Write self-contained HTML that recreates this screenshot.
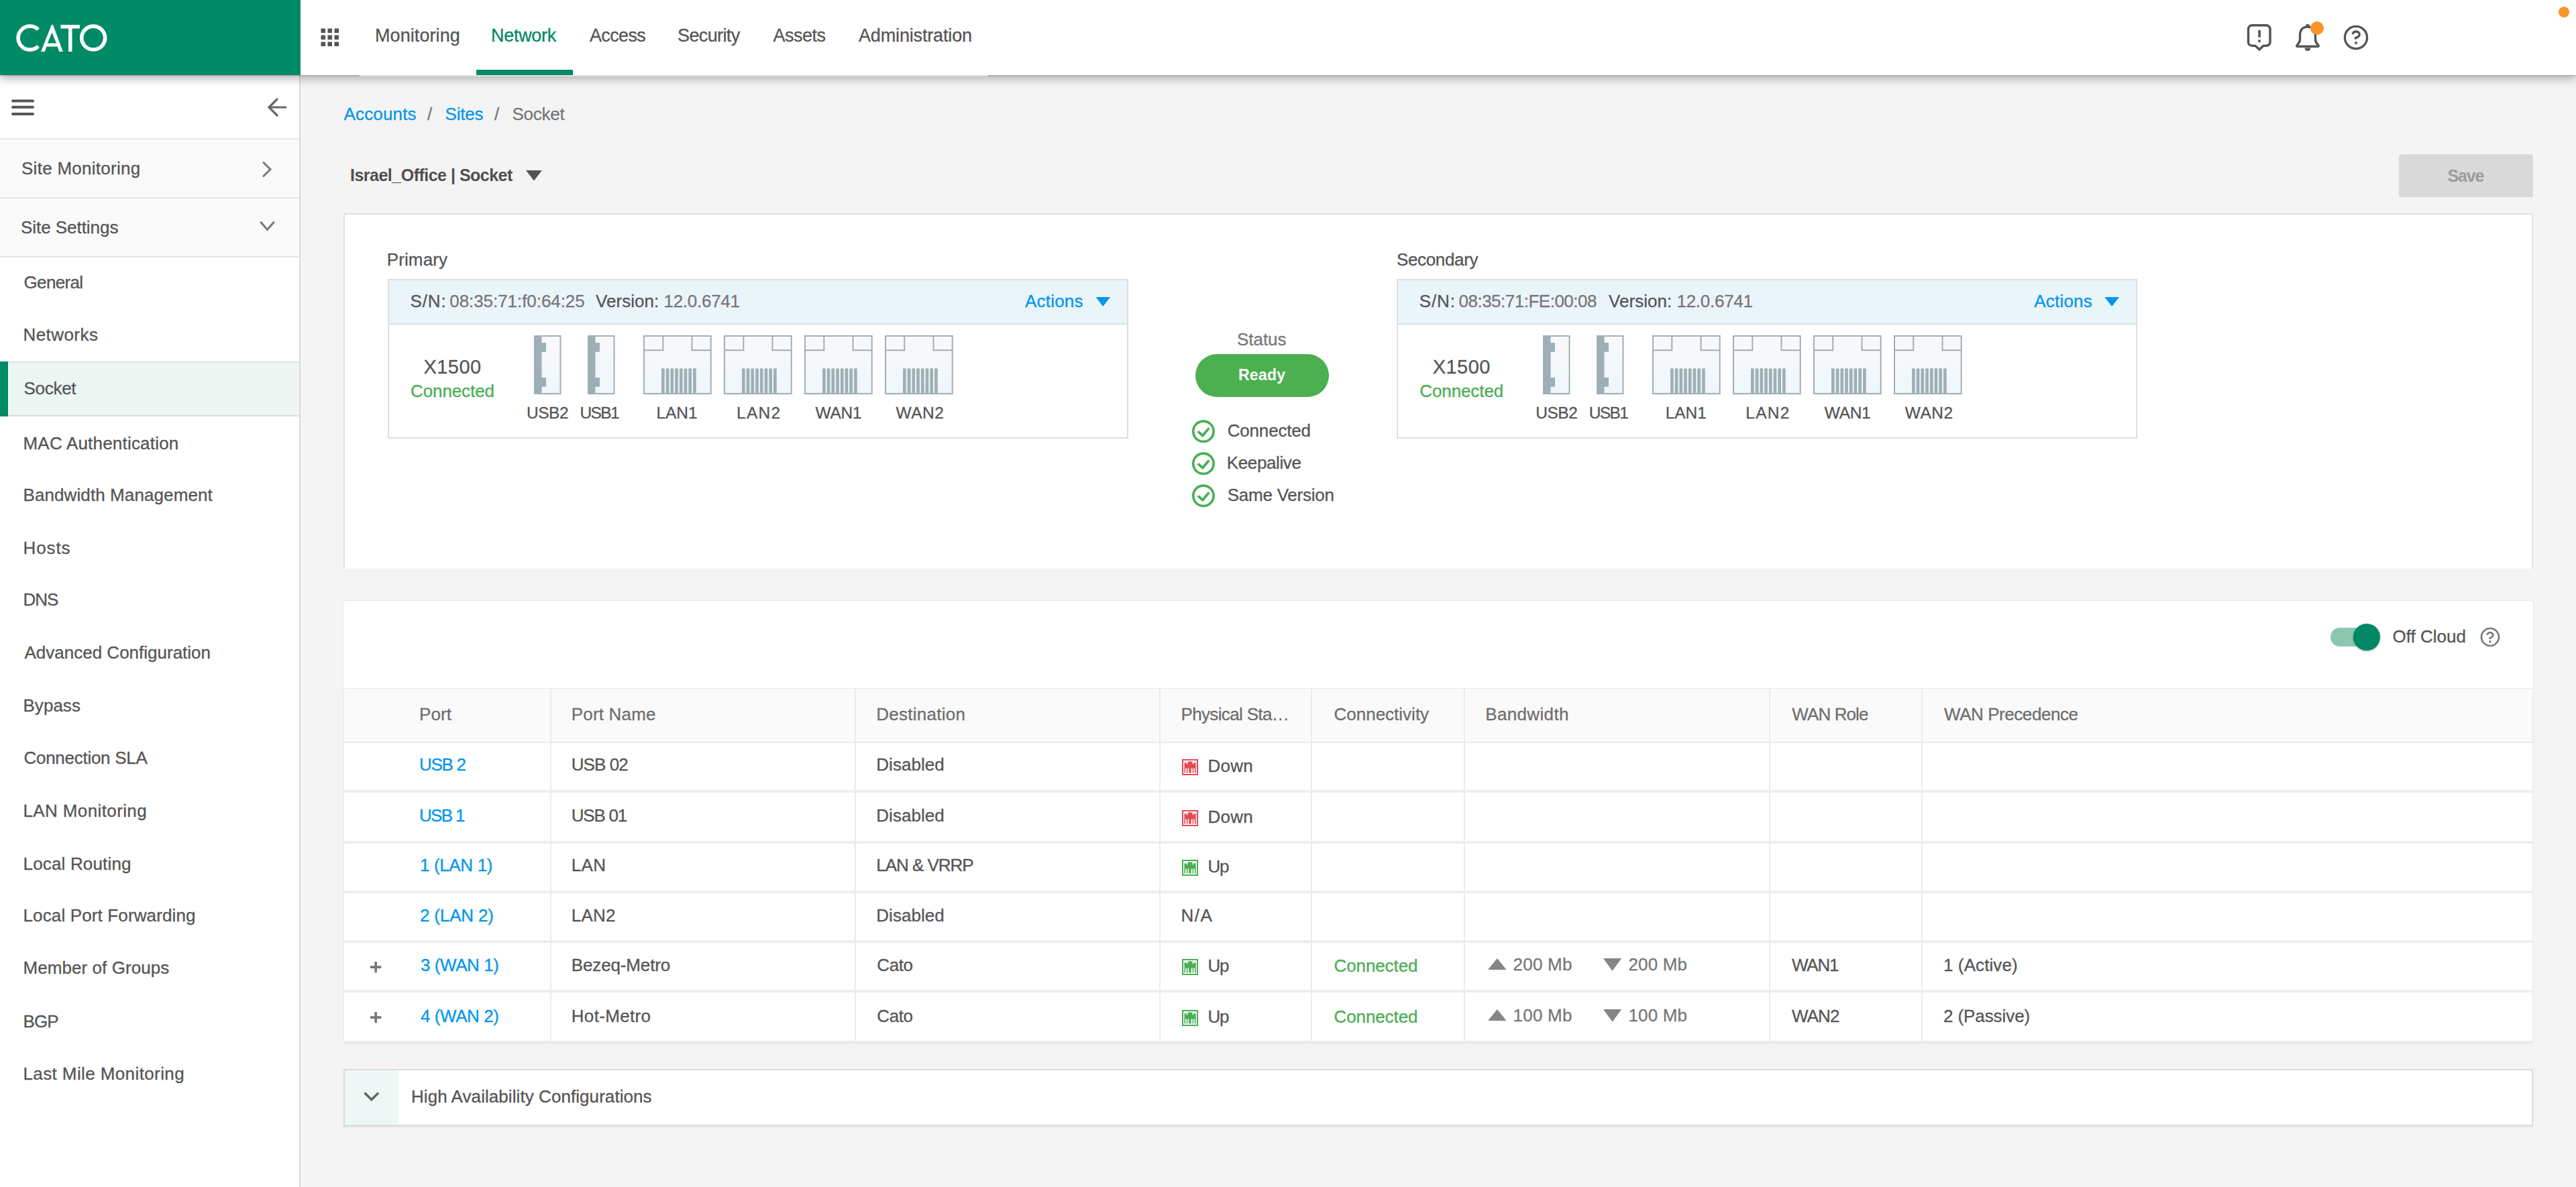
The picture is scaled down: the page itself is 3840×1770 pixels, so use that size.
<!DOCTYPE html>
<html>
<head>
<meta charset="utf-8">
<style>
html,body{margin:0;padding:0;}
body{width:3840px;height:1770px;overflow:hidden;background:#f4f4f4;position:relative;font-family:"Liberation Sans",sans-serif;color:#555;}
.a{position:absolute;}
.t{position:absolute;white-space:nowrap;font-size:26px;line-height:30px;-webkit-text-stroke:0.3px currentColor;}
svg{position:absolute;overflow:visible;}
#topbar{position:absolute;left:0;top:0;width:3840px;height:112px;background:#fff;box-shadow:0 1px 2px rgba(0,0,0,0.18),0 5px 14px rgba(0,0,0,0.30);z-index:5;}
#sidebar{position:absolute;left:0;top:112px;width:446px;height:1658px;background:#fff;border-right:2px solid #dadadd;z-index:2;}
</style>
</head>
<body>
<div id="topbar">
<div class="a" style="left:0.00px;top:0.00px;width:448.00px;height:112.00px;background:#018a66;"></div>
<svg width="448" height="112" style="left:0;top:0">
  <path d="M57.06,44.14 A17.55,17.55 0 1 0 57.06,68.96" fill="none" stroke="#fff" stroke-width="5.6"/>
  <path fill="#fff" fill-rule="evenodd" d="M61,76.9 L76.8,37.1 L79,37.1 L93.9,76.9 L88.2,76.9 L85.8,69.6 L69.3,69.6 L66.9,76.9 Z M77.4,48.3 L70.9,64.4 L84,64.4 Z"/>
  <path fill="#fff" d="M90.5,37.1 H118.9 V42.5 H107.5 V76.9 H102 V42.5 H90.5 Z"/>
  <circle cx="139.15" cy="56.55" r="17.45" fill="none" stroke="#fff" stroke-width="5.6"/>
</svg>
<svg width="30" height="30" style="left:478px;top:42px"><g fill="#555"><rect x="0.5" y="0.5" width="6.5" height="6.5"/><rect x="10.5" y="0.5" width="6.5" height="6.5"/><rect x="20.5" y="0.5" width="6.5" height="6.5"/><rect x="0.5" y="10.5" width="6.5" height="6.5"/><rect x="10.5" y="10.5" width="6.5" height="6.5"/><rect x="20.5" y="10.5" width="6.5" height="6.5"/><rect x="0.5" y="20.5" width="6.5" height="6.5"/><rect x="10.5" y="20.5" width="6.5" height="6.5"/><rect x="20.5" y="20.5" width="6.5" height="6.5"/></g></svg>
<div class="t" style="left:559.00px;top:37.94px;font-size:27px;line-height:30px;letter-spacing:0.078px;">Monitoring</div>
<div class="t" style="left:732.00px;top:37.94px;font-size:27px;line-height:30px;color:#018a66;letter-spacing:-0.295px;">Network</div>
<div class="t" style="left:879.00px;top:37.94px;font-size:27px;line-height:30px;letter-spacing:-0.655px;">Access</div>
<div class="t" style="left:1010.00px;top:37.94px;font-size:27px;line-height:30px;letter-spacing:-0.612px;">Security</div>
<div class="t" style="left:1152.50px;top:37.94px;font-size:27px;line-height:30px;letter-spacing:-0.505px;">Assets</div>
<div class="t" style="left:1280.00px;top:37.94px;font-size:27px;line-height:30px;letter-spacing:-0.158px;">Administration</div>
<div class="a" style="left:710.00px;top:104.00px;width:144.00px;height:8.00px;background:#018a66;"></div>
<div class="a" style="left:536.00px;top:112.00px;width:937.00px;height:2.00px;background:#e2e2e2;"></div>
<svg width="40" height="44" style="left:3348px;top:34px">
  <path d="M9,3.8 H30.5 A5.5,5.5 0 0 1 36,9.3 V28.7 A5.5,5.5 0 0 1 30.5,34.2 H26 L20,40 L14,34.2 H9 A5.5,5.5 0 0 1 3.5,28.7 V9.3 A5.5,5.5 0 0 1 9,3.8 Z" fill="none" stroke="#555" stroke-width="3.5" stroke-linejoin="round"/>
  <rect x="18.2" y="11" width="3.7" height="10.6" fill="#555"/>
  <rect x="18.2" y="25.4" width="3.7" height="3.5" fill="#555"/>
</svg>
<svg width="44" height="44" style="left:3418px;top:34px">
  <path d="M22,6 C13.5,6 10.5,12 10.5,19 V25 C10.5,28.5 8.5,31 6.5,33 C5,34.5 5.5,35.3 7.5,35.3 H36.5 C38.5,35.3 39,34.5 37.5,33 C35.5,31 33.5,28.5 33.5,25 V19 C33.5,12 30.5,6 22,6 Z" fill="none" stroke="#555" stroke-width="3.4" stroke-linejoin="round"/>
  <circle cx="22" cy="4.5" r="2.8" fill="#555"/>
  <path d="M17.5,37.5 A4.5,4.5 0 0 0 26.5,37.5 Z" fill="#555"/>
</svg>
<div class="a" style="left:3444px;top:32px;width:20px;height:20px;border-radius:50%;background:#fb9428;"></div>
<svg width="44" height="44" style="left:3490px;top:34px">
  <circle cx="22" cy="22" r="16.6" fill="none" stroke="#555" stroke-width="3.3"/>
  <path d="M17,17 C17.8,14 20,13 22.3,13 C25.2,13 27.3,15 27.3,17.4 C27.3,20.4 24.3,21.3 21.5,22.6 V24.5" fill="none" stroke="#555" stroke-width="3.3"/>
  <circle cx="22" cy="30" r="2.1" fill="#555"/>
</svg>
<div class="a" style="left:3814px;top:10px;width:16px;height:16px;border-radius:50%;background:#fb9428;"></div>
</div>
<div id="sidebar">
<svg width="40" height="30" style="left:15px;top:34px"><g stroke="#555" stroke-width="4" stroke-linecap="round">
<line x1="4" y1="4.4" x2="34" y2="4.4"/><line x1="4" y1="13.8" x2="34" y2="13.8"/><line x1="4" y1="24" x2="34" y2="24"/></g></svg>
<svg width="34" height="34" style="left:397px;top:31px"><g stroke="#666" stroke-width="3.2" stroke-linecap="round" fill="none">
<line x1="4.5" y1="17" x2="29" y2="17"/><polyline points="16,5 4,17 16,29"/></g></svg>
<div class="a" style="left:0.00px;top:94.00px;width:446.00px;height:2.00px;background:#e6e6e6;"></div>
<div class="a" style="left:0.00px;top:96.00px;width:446.00px;height:86.00px;background:#fafafa;"></div>
<div class="a" style="left:0.00px;top:182.00px;width:446.00px;height:2.00px;background:#e6e6e6;"></div>
<div class="a" style="left:0.00px;top:184.00px;width:446.00px;height:86.00px;background:#fafafa;"></div>
<div class="a" style="left:0.00px;top:270.00px;width:446.00px;height:2.00px;background:#e6e6e6;"></div>
<div class="t" style="left:32.00px;top:124.19px;letter-spacing:0.271px;">Site Monitoring</div>
<svg width="20" height="26" style="left:389px;top:128px"><polyline points="4,2.5 14,12.5 4,22.5" fill="none" stroke="#777" stroke-width="3" stroke-linecap="round"/></svg>
<div class="t" style="left:31.00px;top:212.39px;letter-spacing:-0.048px;">Site Settings</div>
<svg width="26" height="18" style="left:385px;top:216px"><polyline points="4,3.5 13.5,14.5 23,3.5" fill="none" stroke="#777" stroke-width="3" stroke-linecap="round"/></svg>
<div class="a" style="left:0.00px;top:426.50px;width:446.00px;height:78.00px;background:#eef6f4;border-top:2px solid #dedede;border-bottom:2px solid #dedede;"></div>
<div class="a" style="left:0.00px;top:426.50px;width:12.00px;height:82.00px;background:#018a66;"></div>
<div class="t" style="left:35.50px;top:293.99px;letter-spacing:-0.654px;">General</div>
<div class="t" style="left:34.50px;top:371.99px;letter-spacing:0.435px;">Networks</div>
<div class="t" style="left:35.50px;top:451.69px;letter-spacing:-0.292px;">Socket</div>
<div class="t" style="left:34.50px;top:533.59px;letter-spacing:0.204px;">MAC Authentication</div>
<div class="t" style="left:34.50px;top:610.99px;letter-spacing:0.096px;">Bandwidth Management</div>
<div class="t" style="left:34.50px;top:689.99px;letter-spacing:0.910px;">Hosts</div>
<div class="t" style="left:34.50px;top:767.29px;letter-spacing:-1.026px;">DNS</div>
<div class="t" style="left:36.50px;top:845.99px;">Advanced Configuration</div>
<div class="t" style="left:34.50px;top:924.79px;letter-spacing:0.028px;">Bypass</div>
<div class="t" style="left:35.50px;top:1002.59px;letter-spacing:-0.274px;">Connection SLA</div>
<div class="t" style="left:34.50px;top:1081.99px;letter-spacing:0.382px;">LAN Monitoring</div>
<div class="t" style="left:34.50px;top:1160.99px;letter-spacing:0.172px;">Local Routing</div>
<div class="t" style="left:34.50px;top:1237.99px;letter-spacing:0.136px;">Local Port Forwarding</div>
<div class="t" style="left:34.50px;top:1316.49px;letter-spacing:0.070px;">Member of Groups</div>
<div class="t" style="left:34.50px;top:1395.59px;letter-spacing:-0.933px;">BGP</div>
<div class="t" style="left:34.50px;top:1473.99px;letter-spacing:0.395px;">Last Mile Monitoring</div>
</div>
<div class="t" style="left:512.50px;top:155.49px;color:#0396ec;letter-spacing:0.151px;">Accounts</div>
<div class="t" style="left:637.00px;top:155.49px;color:#777;">/</div>
<div class="t" style="left:663.50px;top:155.49px;color:#0396ec;letter-spacing:-0.200px;">Sites</div>
<div class="t" style="left:737.00px;top:155.49px;color:#777;">/</div>
<div class="t" style="left:763.50px;top:155.49px;color:#777;letter-spacing:-0.252px;">Socket</div>
<div class="t" style="left:522.00px;top:246.34px;font-size:25px;line-height:30px;color:#4f4f4f;font-weight:bold;-webkit-text-stroke:0;letter-spacing:-0.506px;">Israel_Office | Socket</div>
<svg width="30" height="20" style="left:782px;top:252px"><path d="M2,2 H26 L14,17.5 Z" fill="#555"/></svg>
<div class="a" style="left:3576.00px;top:230.00px;width:200.00px;height:64.00px;background:#d9d9d9;border-radius:4px;"></div>
<div class="t" style="left:3648.50px;top:246.84px;font-size:25px;line-height:30px;color:#9c9c9c;font-weight:bold;-webkit-text-stroke:0;letter-spacing:-1.161px;">Save</div>
<div class="a" style="left:512.00px;top:318.00px;width:3264.00px;height:530.00px;background:#fff;box-sizing:border-box;border:2px solid #e1e1e1;border-bottom:none;"></div>
<svg width="0" height="0" style="left:0;top:0"><defs><linearGradient id="pg" x1="0" y1="0" x2="0" y2="1"><stop offset="0" stop-color="#f9f9fb"/><stop offset="1" stop-color="#eef7fa"/></linearGradient></defs></svg>
<div class="t" style="left:576.75px;top:372.24px;letter-spacing:0.116px;">Primary</div>
<div class="a" style="left:578.00px;top:416.00px;width:1104.00px;height:238.00px;background:#fff;box-sizing:border-box;border:2px solid #dcdfe1;"></div>
<div class="a" style="left:580.00px;top:418.00px;width:1100.00px;height:64.00px;background:#eaf5fa;border-bottom:2px solid #d8dfe2;"></div>
<div class="t" style="left:611.50px;top:433.99px;letter-spacing:0.886px;">S/N:</div>
<div class="t" style="left:670.25px;top:433.99px;color:#777;letter-spacing:-0.059px;">08:35:71:f0:64:25</div>
<div class="t" style="left:888.00px;top:433.99px;letter-spacing:0.040px;">Version:</div>
<div class="t" style="left:989.50px;top:433.99px;color:#777;letter-spacing:-0.276px;">12.0.6741</div>
<div class="t" style="left:1528.00px;top:434.24px;color:#0396ec;letter-spacing:0.206px;">Actions</div>
<svg width="24" height="18" style="left:1631.00px;top:441px"><path d="M2.5,2 H24 L13.2,16 Z" fill="#0396ec"/></svg>
<div class="t" style="left:631.50px;top:529.45px;font-size:29px;line-height:36px;letter-spacing:0.443px;">X1500</div>
<div class="t" style="left:612.00px;top:568.49px;color:#4aae54;letter-spacing:-0.100px;">Connected</div>
<svg width="41" height="88" style="left:795.75px;top:500.00px"><rect x="1" y="1" width="38.5" height="86" fill="url(#pg)" stroke="#9eb0b6" stroke-width="2"/><path d="M0,0 H11.5 V11 H18 V24.7 H11.5 V63 H18 V76.8 H11.5 V88 H0 Z" fill="#9eb0b6"/></svg>
<svg width="41" height="88" style="left:875.75px;top:500.00px"><rect x="1" y="1" width="38.5" height="86" fill="url(#pg)" stroke="#9eb0b6" stroke-width="2"/><path d="M0,0 H11.5 V11 H18 V24.7 H11.5 V63 H18 V76.8 H11.5 V88 H0 Z" fill="#9eb0b6"/></svg>
<svg width="102" height="88" style="left:959.00px;top:500.00px"><rect x="1" y="1" width="99.7" height="86" fill="url(#pg)" stroke="#9eb0b6" stroke-width="2"/><path d="M1,22.2 H29.3 V1 M100.7,22.2 H72.5 V1" fill="none" stroke="#9eb0b6" stroke-width="2"/><rect x="27.00" y="49.4" width="4.7" height="38" fill="#9eb0b6"/><rect x="33.72" y="49.4" width="4.7" height="38" fill="#9eb0b6"/><rect x="40.44" y="49.4" width="4.7" height="38" fill="#9eb0b6"/><rect x="47.16" y="49.4" width="4.7" height="38" fill="#9eb0b6"/><rect x="53.88" y="49.4" width="4.7" height="38" fill="#9eb0b6"/><rect x="60.60" y="49.4" width="4.7" height="38" fill="#9eb0b6"/><rect x="67.32" y="49.4" width="4.7" height="38" fill="#9eb0b6"/><rect x="74.04" y="49.4" width="4.7" height="38" fill="#9eb0b6"/></svg>
<svg width="102" height="88" style="left:1079.00px;top:500.00px"><rect x="1" y="1" width="99.7" height="86" fill="url(#pg)" stroke="#9eb0b6" stroke-width="2"/><path d="M1,22.2 H29.3 V1 M100.7,22.2 H72.5 V1" fill="none" stroke="#9eb0b6" stroke-width="2"/><rect x="27.00" y="49.4" width="4.7" height="38" fill="#9eb0b6"/><rect x="33.72" y="49.4" width="4.7" height="38" fill="#9eb0b6"/><rect x="40.44" y="49.4" width="4.7" height="38" fill="#9eb0b6"/><rect x="47.16" y="49.4" width="4.7" height="38" fill="#9eb0b6"/><rect x="53.88" y="49.4" width="4.7" height="38" fill="#9eb0b6"/><rect x="60.60" y="49.4" width="4.7" height="38" fill="#9eb0b6"/><rect x="67.32" y="49.4" width="4.7" height="38" fill="#9eb0b6"/><rect x="74.04" y="49.4" width="4.7" height="38" fill="#9eb0b6"/></svg>
<svg width="102" height="88" style="left:1199.00px;top:500.00px"><rect x="1" y="1" width="99.7" height="86" fill="url(#pg)" stroke="#9eb0b6" stroke-width="2"/><path d="M1,22.2 H29.3 V1 M100.7,22.2 H72.5 V1" fill="none" stroke="#9eb0b6" stroke-width="2"/><rect x="27.00" y="49.4" width="4.7" height="38" fill="#9eb0b6"/><rect x="33.72" y="49.4" width="4.7" height="38" fill="#9eb0b6"/><rect x="40.44" y="49.4" width="4.7" height="38" fill="#9eb0b6"/><rect x="47.16" y="49.4" width="4.7" height="38" fill="#9eb0b6"/><rect x="53.88" y="49.4" width="4.7" height="38" fill="#9eb0b6"/><rect x="60.60" y="49.4" width="4.7" height="38" fill="#9eb0b6"/><rect x="67.32" y="49.4" width="4.7" height="38" fill="#9eb0b6"/><rect x="74.04" y="49.4" width="4.7" height="38" fill="#9eb0b6"/></svg>
<svg width="102" height="88" style="left:1319.00px;top:500.00px"><rect x="1" y="1" width="99.7" height="86" fill="url(#pg)" stroke="#9eb0b6" stroke-width="2"/><path d="M1,22.2 H29.3 V1 M100.7,22.2 H72.5 V1" fill="none" stroke="#9eb0b6" stroke-width="2"/><rect x="27.00" y="49.4" width="4.7" height="38" fill="#9eb0b6"/><rect x="33.72" y="49.4" width="4.7" height="38" fill="#9eb0b6"/><rect x="40.44" y="49.4" width="4.7" height="38" fill="#9eb0b6"/><rect x="47.16" y="49.4" width="4.7" height="38" fill="#9eb0b6"/><rect x="53.88" y="49.4" width="4.7" height="38" fill="#9eb0b6"/><rect x="60.60" y="49.4" width="4.7" height="38" fill="#9eb0b6"/><rect x="67.32" y="49.4" width="4.7" height="38" fill="#9eb0b6"/><rect x="74.04" y="49.4" width="4.7" height="38" fill="#9eb0b6"/></svg>
<div class="t" style="left:785.00px;top:600.51px;font-size:24.5px;line-height:30px;letter-spacing:-0.459px;">USB2</div>
<div class="t" style="left:864.40px;top:600.51px;font-size:24.5px;line-height:30px;letter-spacing:-1.592px;">USB1</div>
<div class="t" style="left:978.50px;top:600.51px;font-size:24.5px;line-height:30px;letter-spacing:-0.087px;">LAN1</div>
<div class="t" style="left:1098.00px;top:600.51px;font-size:24.5px;line-height:30px;letter-spacing:1.280px;">LAN2</div>
<div class="t" style="left:1215.50px;top:600.51px;font-size:24.5px;line-height:30px;letter-spacing:-0.333px;">WAN1</div>
<div class="t" style="left:1335.50px;top:600.51px;font-size:24.5px;line-height:30px;letter-spacing:0.500px;">WAN2</div>
<div class="t" style="left:2082.00px;top:372.24px;letter-spacing:-0.350px;">Secondary</div>
<div class="a" style="left:2082.25px;top:416.00px;width:1104.00px;height:238.00px;background:#fff;box-sizing:border-box;border:2px solid #dcdfe1;"></div>
<div class="a" style="left:2084.25px;top:418.00px;width:1100.00px;height:64.00px;background:#eaf5fa;border-bottom:2px solid #d8dfe2;"></div>
<div class="t" style="left:2115.75px;top:433.99px;letter-spacing:0.886px;">S/N:</div>
<div class="t" style="left:2174.50px;top:433.99px;color:#777;letter-spacing:-0.499px;">08:35:71:FE:00:08</div>
<div class="t" style="left:2398.00px;top:433.99px;letter-spacing:0.040px;">Version:</div>
<div class="t" style="left:2499.50px;top:433.99px;color:#777;letter-spacing:-0.276px;">12.0.6741</div>
<div class="t" style="left:3032.25px;top:434.24px;color:#0396ec;letter-spacing:0.206px;">Actions</div>
<svg width="24" height="18" style="left:3135.25px;top:441px"><path d="M2.5,2 H24 L13.2,16 Z" fill="#0396ec"/></svg>
<div class="t" style="left:2135.75px;top:529.45px;font-size:29px;line-height:36px;letter-spacing:0.443px;">X1500</div>
<div class="t" style="left:2116.25px;top:568.49px;color:#4aae54;letter-spacing:-0.100px;">Connected</div>
<svg width="41" height="88" style="left:2300.00px;top:500.00px"><rect x="1" y="1" width="38.5" height="86" fill="url(#pg)" stroke="#9eb0b6" stroke-width="2"/><path d="M0,0 H11.5 V11 H18 V24.7 H11.5 V63 H18 V76.8 H11.5 V88 H0 Z" fill="#9eb0b6"/></svg>
<svg width="41" height="88" style="left:2380.00px;top:500.00px"><rect x="1" y="1" width="38.5" height="86" fill="url(#pg)" stroke="#9eb0b6" stroke-width="2"/><path d="M0,0 H11.5 V11 H18 V24.7 H11.5 V63 H18 V76.8 H11.5 V88 H0 Z" fill="#9eb0b6"/></svg>
<svg width="102" height="88" style="left:2463.25px;top:500.00px"><rect x="1" y="1" width="99.7" height="86" fill="url(#pg)" stroke="#9eb0b6" stroke-width="2"/><path d="M1,22.2 H29.3 V1 M100.7,22.2 H72.5 V1" fill="none" stroke="#9eb0b6" stroke-width="2"/><rect x="27.00" y="49.4" width="4.7" height="38" fill="#9eb0b6"/><rect x="33.72" y="49.4" width="4.7" height="38" fill="#9eb0b6"/><rect x="40.44" y="49.4" width="4.7" height="38" fill="#9eb0b6"/><rect x="47.16" y="49.4" width="4.7" height="38" fill="#9eb0b6"/><rect x="53.88" y="49.4" width="4.7" height="38" fill="#9eb0b6"/><rect x="60.60" y="49.4" width="4.7" height="38" fill="#9eb0b6"/><rect x="67.32" y="49.4" width="4.7" height="38" fill="#9eb0b6"/><rect x="74.04" y="49.4" width="4.7" height="38" fill="#9eb0b6"/></svg>
<svg width="102" height="88" style="left:2583.25px;top:500.00px"><rect x="1" y="1" width="99.7" height="86" fill="url(#pg)" stroke="#9eb0b6" stroke-width="2"/><path d="M1,22.2 H29.3 V1 M100.7,22.2 H72.5 V1" fill="none" stroke="#9eb0b6" stroke-width="2"/><rect x="27.00" y="49.4" width="4.7" height="38" fill="#9eb0b6"/><rect x="33.72" y="49.4" width="4.7" height="38" fill="#9eb0b6"/><rect x="40.44" y="49.4" width="4.7" height="38" fill="#9eb0b6"/><rect x="47.16" y="49.4" width="4.7" height="38" fill="#9eb0b6"/><rect x="53.88" y="49.4" width="4.7" height="38" fill="#9eb0b6"/><rect x="60.60" y="49.4" width="4.7" height="38" fill="#9eb0b6"/><rect x="67.32" y="49.4" width="4.7" height="38" fill="#9eb0b6"/><rect x="74.04" y="49.4" width="4.7" height="38" fill="#9eb0b6"/></svg>
<svg width="102" height="88" style="left:2703.25px;top:500.00px"><rect x="1" y="1" width="99.7" height="86" fill="url(#pg)" stroke="#9eb0b6" stroke-width="2"/><path d="M1,22.2 H29.3 V1 M100.7,22.2 H72.5 V1" fill="none" stroke="#9eb0b6" stroke-width="2"/><rect x="27.00" y="49.4" width="4.7" height="38" fill="#9eb0b6"/><rect x="33.72" y="49.4" width="4.7" height="38" fill="#9eb0b6"/><rect x="40.44" y="49.4" width="4.7" height="38" fill="#9eb0b6"/><rect x="47.16" y="49.4" width="4.7" height="38" fill="#9eb0b6"/><rect x="53.88" y="49.4" width="4.7" height="38" fill="#9eb0b6"/><rect x="60.60" y="49.4" width="4.7" height="38" fill="#9eb0b6"/><rect x="67.32" y="49.4" width="4.7" height="38" fill="#9eb0b6"/><rect x="74.04" y="49.4" width="4.7" height="38" fill="#9eb0b6"/></svg>
<svg width="102" height="88" style="left:2823.25px;top:500.00px"><rect x="1" y="1" width="99.7" height="86" fill="url(#pg)" stroke="#9eb0b6" stroke-width="2"/><path d="M1,22.2 H29.3 V1 M100.7,22.2 H72.5 V1" fill="none" stroke="#9eb0b6" stroke-width="2"/><rect x="27.00" y="49.4" width="4.7" height="38" fill="#9eb0b6"/><rect x="33.72" y="49.4" width="4.7" height="38" fill="#9eb0b6"/><rect x="40.44" y="49.4" width="4.7" height="38" fill="#9eb0b6"/><rect x="47.16" y="49.4" width="4.7" height="38" fill="#9eb0b6"/><rect x="53.88" y="49.4" width="4.7" height="38" fill="#9eb0b6"/><rect x="60.60" y="49.4" width="4.7" height="38" fill="#9eb0b6"/><rect x="67.32" y="49.4" width="4.7" height="38" fill="#9eb0b6"/><rect x="74.04" y="49.4" width="4.7" height="38" fill="#9eb0b6"/></svg>
<div class="t" style="left:2289.25px;top:600.51px;font-size:24.5px;line-height:30px;letter-spacing:-0.459px;">USB2</div>
<div class="t" style="left:2368.65px;top:600.51px;font-size:24.5px;line-height:30px;letter-spacing:-1.592px;">USB1</div>
<div class="t" style="left:2482.75px;top:600.51px;font-size:24.5px;line-height:30px;letter-spacing:-0.087px;">LAN1</div>
<div class="t" style="left:2602.25px;top:600.51px;font-size:24.5px;line-height:30px;letter-spacing:1.280px;">LAN2</div>
<div class="t" style="left:2719.75px;top:600.51px;font-size:24.5px;line-height:30px;letter-spacing:-0.333px;">WAN1</div>
<div class="t" style="left:2839.75px;top:600.51px;font-size:24.5px;line-height:30px;letter-spacing:0.500px;">WAN2</div>
<div class="t" style="left:1844.00px;top:491.49px;color:#777;letter-spacing:-0.042px;">Status</div>
<div class="a" style="left:1782.00px;top:527.50px;width:199.00px;height:64.00px;background:#4caf50;border-radius:32px;"></div>
<div class="t" style="left:1846.00px;top:544.03px;font-size:23px;line-height:30px;color:#fff;font-weight:bold;-webkit-text-stroke:0;letter-spacing:0.252px;">Ready</div>
<svg width="40" height="40" style="left:1774px;top:623.00px"><circle cx="19.9" cy="20.3" r="15.2" fill="none" stroke="#4aae54" stroke-width="3.6"/><polyline points="12.9,21.4 18.8,26.7 27.2,16.6" fill="none" stroke="#4aae54" stroke-width="3.8" stroke-linecap="round" stroke-linejoin="round"/></svg>
<div class="t" style="left:1829.75px;top:626.99px;letter-spacing:-0.194px;">Connected</div>
<svg width="40" height="40" style="left:1774px;top:670.75px"><circle cx="19.9" cy="20.3" r="15.2" fill="none" stroke="#4aae54" stroke-width="3.6"/><polyline points="12.9,21.4 18.8,26.7 27.2,16.6" fill="none" stroke="#4aae54" stroke-width="3.8" stroke-linecap="round" stroke-linejoin="round"/></svg>
<div class="t" style="left:1828.75px;top:674.74px;letter-spacing:-0.373px;">Keepalive</div>
<svg width="40" height="40" style="left:1774px;top:718.75px"><circle cx="19.9" cy="20.3" r="15.2" fill="none" stroke="#4aae54" stroke-width="3.6"/><polyline points="12.9,21.4 18.8,26.7 27.2,16.6" fill="none" stroke="#4aae54" stroke-width="3.8" stroke-linecap="round" stroke-linejoin="round"/></svg>
<div class="t" style="left:1829.75px;top:722.74px;letter-spacing:-0.241px;">Same Version</div>
<div class="a" style="left:512.00px;top:896.00px;width:3264.00px;height:130.00px;background:#fff;border-radius:4px 4px 0 0;box-shadow:0 0 2px rgba(0,0,0,0.18);"></div>
<div class="a" style="left:3474.00px;top:936.00px;width:67.00px;height:28.00px;background:#8cc7b2;border-radius:14px;"></div>
<div class="a" style="left:3508.00px;top:930.00px;width:40.00px;height:40.00px;background:#028864;border-radius:50%;box-shadow:0 1px 3px rgba(0,0,0,0.35);"></div>
<div class="t" style="left:3566.50px;top:933.99px;">Off Cloud</div>
<svg width="34" height="34" style="left:3695px;top:933px"><circle cx="17" cy="17" r="13" fill="none" stroke="#777" stroke-width="2.6"/><path d="M12.6,13.6 C13.2,11 15,10.2 17,10.2 C19.6,10.2 21.3,11.9 21.3,14 C21.3,16.6 18.8,17.4 16.6,18.6 V20" fill="none" stroke="#777" stroke-width="2.6"/><circle cx="17" cy="23.8" r="1.7" fill="#777"/></svg>
<div class="a" style="left:513.00px;top:1027.00px;width:3261.50px;height:525.00px;background:#fff;box-shadow:0 2px 3px rgba(0,0,0,0.10);"></div>
<div class="a" style="left:513.00px;top:1027.00px;width:3261.50px;height:79.00px;background:#fafafa;"></div>
<div class="a" style="left:513.00px;top:1105.50px;width:3261.50px;height:2.00px;background:#e8e8e8;"></div>
<div class="a" style="left:513.00px;top:1177.50px;width:3261.50px;height:4.00px;background:#eeeeee;"></div>
<div class="a" style="left:513.00px;top:1254.00px;width:3261.50px;height:4.00px;background:#eeeeee;"></div>
<div class="a" style="left:513.00px;top:1328.00px;width:3261.50px;height:4.00px;background:#eeeeee;"></div>
<div class="a" style="left:513.00px;top:1402.00px;width:3261.50px;height:4.00px;background:#eeeeee;"></div>
<div class="a" style="left:513.00px;top:1476.25px;width:3261.50px;height:4.00px;background:#eeeeee;"></div>
<div class="a" style="left:513.00px;top:1552.00px;width:3263.00px;height:5.00px;background:#ebebeb;"></div>
<div class="a" style="left:819.50px;top:1027.00px;width:2.00px;height:525.00px;background:#ebebeb;"></div>
<div class="a" style="left:1274.00px;top:1027.00px;width:2.00px;height:525.00px;background:#ebebeb;"></div>
<div class="a" style="left:1728.00px;top:1027.00px;width:2.00px;height:525.00px;background:#ebebeb;"></div>
<div class="a" style="left:1954.00px;top:1027.00px;width:2.00px;height:525.00px;background:#ebebeb;"></div>
<div class="a" style="left:2181.50px;top:1027.00px;width:2.00px;height:525.00px;background:#ebebeb;"></div>
<div class="a" style="left:2636.50px;top:1027.00px;width:2.00px;height:525.00px;background:#ebebeb;"></div>
<div class="a" style="left:2864.00px;top:1027.00px;width:2.00px;height:525.00px;background:#ebebeb;"></div>
<div class="t" style="left:625.00px;top:1049.74px;color:#6e6e6e;letter-spacing:0.097px;">Port</div>
<div class="t" style="left:851.75px;top:1049.74px;color:#6e6e6e;letter-spacing:0.181px;">Port Name</div>
<div class="t" style="left:1306.25px;top:1049.74px;color:#6e6e6e;letter-spacing:0.263px;">Destination</div>
<div class="t" style="left:1760.50px;top:1049.74px;color:#6e6e6e;letter-spacing:-0.651px;">Physical Sta…</div>
<div class="t" style="left:1988.50px;top:1049.74px;color:#6e6e6e;">Connectivity</div>
<div class="t" style="left:2214.25px;top:1049.74px;color:#6e6e6e;letter-spacing:0.349px;">Bandwidth</div>
<div class="t" style="left:2671.25px;top:1049.74px;color:#6e6e6e;letter-spacing:-0.883px;">WAN Role</div>
<div class="t" style="left:2898.00px;top:1049.74px;color:#6e6e6e;letter-spacing:-0.440px;">WAN Precedence</div>
<div class="t" style="left:625.00px;top:1125.49px;color:#0396ec;letter-spacing:-1.296px;">USB 2</div>
<div class="t" style="left:851.75px;top:1125.49px;letter-spacing:-0.929px;">USB 02</div>
<div class="t" style="left:1306.25px;top:1125.49px;letter-spacing:0.042px;">Disabled</div>
<svg width="24" height="24" style="left:1762.00px;top:1131.75px"><rect x="1" y="1" width="22" height="22" fill="#fff" stroke="#e34b55" stroke-width="2"/><path d="M3.4,5.2 H6.8 V7.2 H8.5 V3.4 H15.6 V7.2 H17.2 V5.2 H20.6 V20.6 H18.9 V13.5 H17.2 V20.6 H15.6 V13.5 H13.7 V20.6 H10.2 V13.5 H8.5 V20.6 H6.8 V13.5 H5.1 V20.6 H3.4 Z" fill="#e34b55"/></svg>
<div class="t" style="left:1800.50px;top:1127.24px;letter-spacing:0.246px;">Down</div>
<div class="t" style="left:625.00px;top:1201.49px;color:#0396ec;letter-spacing:-1.671px;">USB 1</div>
<div class="t" style="left:851.75px;top:1201.49px;letter-spacing:-1.229px;">USB 01</div>
<div class="t" style="left:1306.25px;top:1201.49px;letter-spacing:0.042px;">Disabled</div>
<svg width="24" height="24" style="left:1762.00px;top:1207.75px"><rect x="1" y="1" width="22" height="22" fill="#fff" stroke="#e34b55" stroke-width="2"/><path d="M3.4,5.2 H6.8 V7.2 H8.5 V3.4 H15.6 V7.2 H17.2 V5.2 H20.6 V20.6 H18.9 V13.5 H17.2 V20.6 H15.6 V13.5 H13.7 V20.6 H10.2 V13.5 H8.5 V20.6 H6.8 V13.5 H5.1 V20.6 H3.4 Z" fill="#e34b55"/></svg>
<div class="t" style="left:1800.50px;top:1203.24px;letter-spacing:0.246px;">Down</div>
<div class="t" style="left:626.00px;top:1275.49px;color:#0396ec;letter-spacing:-0.357px;">1 (LAN 1)</div>
<div class="t" style="left:851.75px;top:1275.49px;letter-spacing:0.349px;">LAN</div>
<div class="t" style="left:1306.25px;top:1275.49px;letter-spacing:-1.029px;">LAN &amp; VRRP</div>
<svg width="24" height="24" style="left:1762.00px;top:1281.50px"><rect x="1" y="1" width="22" height="22" fill="#fff" stroke="#4aae54" stroke-width="2"/><path d="M3.4,5.2 H6.8 V7.2 H8.5 V3.4 H15.6 V7.2 H17.2 V5.2 H20.6 V20.6 H18.9 V13.5 H17.2 V20.6 H15.6 V13.5 H13.7 V20.6 H10.2 V13.5 H8.5 V20.6 H6.8 V13.5 H5.1 V20.6 H3.4 Z" fill="#4aae54"/></svg>
<div class="t" style="left:1800.50px;top:1276.99px;letter-spacing:-1.276px;">Up</div>
<div class="t" style="left:626.00px;top:1349.74px;color:#0396ec;letter-spacing:-0.169px;">2 (LAN 2)</div>
<div class="t" style="left:851.75px;top:1349.74px;letter-spacing:0.224px;">LAN2</div>
<div class="t" style="left:1306.25px;top:1349.74px;letter-spacing:0.042px;">Disabled</div>
<div class="t" style="left:1760.50px;top:1349.74px;letter-spacing:1.500px;">N/A</div>
<div class="t" style="left:627.00px;top:1423.99px;color:#0396ec;letter-spacing:-0.434px;">3 (WAN 1)</div>
<div class="t" style="left:851.75px;top:1423.99px;letter-spacing:-0.138px;">Bezeq-Metro</div>
<div class="t" style="left:1307.25px;top:1423.99px;letter-spacing:-0.387px;">Cato</div>
<svg width="24" height="24" style="left:1762.00px;top:1430.00px"><rect x="1" y="1" width="22" height="22" fill="#fff" stroke="#4aae54" stroke-width="2"/><path d="M3.4,5.2 H6.8 V7.2 H8.5 V3.4 H15.6 V7.2 H17.2 V5.2 H20.6 V20.6 H18.9 V13.5 H17.2 V20.6 H15.6 V13.5 H13.7 V20.6 H10.2 V13.5 H8.5 V20.6 H6.8 V13.5 H5.1 V20.6 H3.4 Z" fill="#4aae54"/></svg>
<div class="t" style="left:1800.50px;top:1425.49px;letter-spacing:-1.276px;">Up</div>
<svg width="20" height="20" style="left:551.75px;top:1433.50px"><path d="M0,8.1 H16.3 M8.15,0 V16.3" stroke="#777" stroke-width="3.6"/></svg>
<div class="t" style="left:1988.50px;top:1425.49px;color:#4aae54;letter-spacing:-0.100px;">Connected</div>
<svg width="30" height="20" style="left:2218px;top:1429.25px"><path d="M0,17 L13.8,0 L27.6,17 Z" fill="#858585"/></svg>
<div class="t" style="left:2255.50px;top:1423.49px;color:#777;letter-spacing:0.248px;">200 Mb</div>
<svg width="30" height="20" style="left:2390.4px;top:1428.80px"><path d="M0,0 L27.2,0 L13.6,18.7 Z" fill="#858585"/></svg>
<div class="t" style="left:2427.40px;top:1423.49px;color:#777;letter-spacing:0.188px;">200 Mb</div>
<div class="t" style="left:2671.00px;top:1423.99px;letter-spacing:-1.231px;">WAN1</div>
<div class="t" style="left:2897.00px;top:1423.99px;letter-spacing:0.095px;">1 (Active)</div>
<div class="t" style="left:627.00px;top:1499.74px;color:#0396ec;letter-spacing:-0.434px;">4 (WAN 2)</div>
<div class="t" style="left:851.75px;top:1499.74px;letter-spacing:0.329px;">Hot-Metro</div>
<div class="t" style="left:1307.25px;top:1499.74px;letter-spacing:-0.387px;">Cato</div>
<svg width="24" height="24" style="left:1762.00px;top:1505.75px"><rect x="1" y="1" width="22" height="22" fill="#fff" stroke="#4aae54" stroke-width="2"/><path d="M3.4,5.2 H6.8 V7.2 H8.5 V3.4 H15.6 V7.2 H17.2 V5.2 H20.6 V20.6 H18.9 V13.5 H17.2 V20.6 H15.6 V13.5 H13.7 V20.6 H10.2 V13.5 H8.5 V20.6 H6.8 V13.5 H5.1 V20.6 H3.4 Z" fill="#4aae54"/></svg>
<div class="t" style="left:1800.50px;top:1501.24px;letter-spacing:-1.276px;">Up</div>
<svg width="20" height="20" style="left:551.75px;top:1509.25px"><path d="M0,8.1 H16.3 M8.15,0 V16.3" stroke="#777" stroke-width="3.6"/></svg>
<div class="t" style="left:1988.50px;top:1501.24px;color:#4aae54;letter-spacing:-0.100px;">Connected</div>
<svg width="30" height="20" style="left:2218px;top:1505.00px"><path d="M0,17 L13.8,0 L27.6,17 Z" fill="#858585"/></svg>
<div class="t" style="left:2255.50px;top:1499.24px;color:#777;letter-spacing:0.248px;">100 Mb</div>
<svg width="30" height="20" style="left:2390.4px;top:1504.55px"><path d="M0,0 L27.2,0 L13.6,18.7 Z" fill="#858585"/></svg>
<div class="t" style="left:2427.40px;top:1499.24px;color:#777;letter-spacing:0.188px;">100 Mb</div>
<div class="t" style="left:2671.00px;top:1499.74px;letter-spacing:-0.898px;">WAN2</div>
<div class="t" style="left:2897.00px;top:1499.74px;letter-spacing:-0.088px;">2 (Passive)</div>
<div class="a" style="left:512.00px;top:1594.00px;width:3264.00px;height:86.00px;background:#fff;box-sizing:border-box;border:2px solid #dcdcdc;border-bottom:3px solid #e0e0e0;box-shadow:0 1px 1px rgba(0,0,0,0.06);"></div>
<div class="a" style="left:514.00px;top:1596.00px;width:80.00px;height:81.00px;background:#eef7f5;"></div>
<svg width="30" height="20" style="left:540px;top:1626px"><polyline points="3.5,3.5 13.8,13.8 24.1,3.5" fill="none" stroke="#666" stroke-width="3.6"/></svg>
<div class="t" style="left:613.00px;top:1619.74px;letter-spacing:0.067px;">High Availability Configurations</div>
</body>
</html>
